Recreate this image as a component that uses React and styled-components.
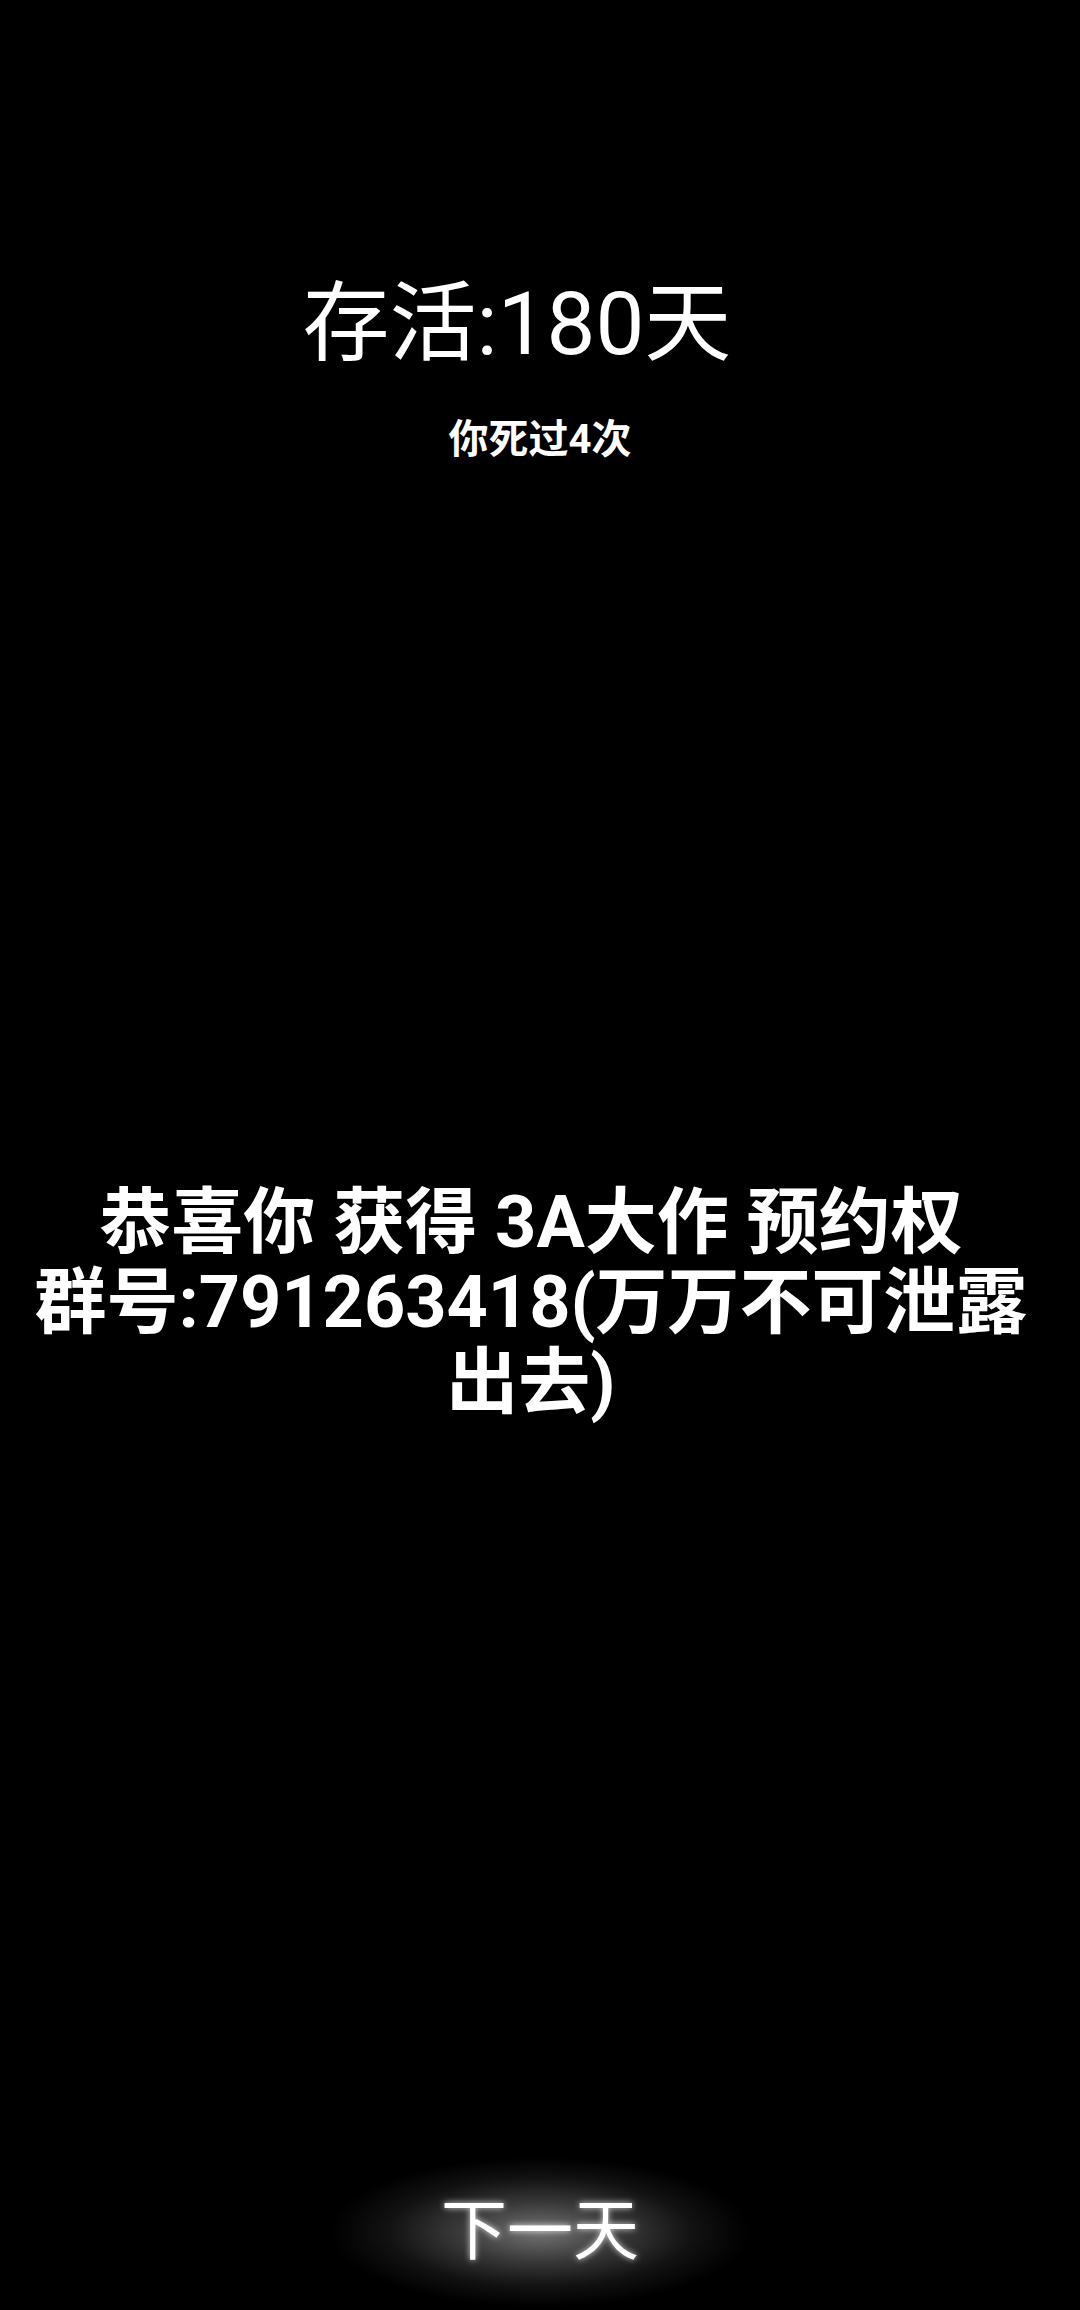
import React from 'react'
import styled, { createGlobalStyle } from 'styled-components'

const GlobalStyle = createGlobalStyle`
  html, body {
    margin: 0;
    padding: 0;
    background: #000;
  }
  body {
    font-family: Roboto, "Noto Sans CJK SC", sans-serif;
    color: #fff;
  }
`

const Screen = styled.div`
  height: 2310px;
  display: flex;
  flex-direction: column;
  align-items: stretch;
  background: #000;
  overflow: hidden;
`

const Days = styled.h1`
  margin: 274px 0 0;
  padding-right: 46px;
  font-size: 87px;
  line-height: 100px;
  font-weight: 400;
  text-align: center;
`

const Deaths = styled.div`
  margin-top: 41px;
  font-size: 40px;
  line-height: 50px;
  font-weight: 700;
  text-align: center;
`

const Message = styled.p`
  margin: 718px 0 0;
  padding: 0 40px 0 22px;
  font-size: 72px;
  line-height: 80px;
  font-weight: 700;
  text-align: center;
`

const NextButton = styled.button`
  align-self: center;
  margin-top: auto;
  margin-bottom: 3px;
  width: 420px;
  height: 150px;
  padding: 0;
  border: none;
  cursor: pointer;
  font-family: inherit;
  font-size: 66px;
  line-height: 150px;
  font-weight: 400;
  color: #fff;
  text-shadow: 0 0 6px rgba(255, 255, 255, 0.8);
  background: radial-gradient(
    closest-side at 50% 50%,
    rgba(255, 255, 255, 0.45) 0%,
    rgba(255, 255, 255, 0.22) 40%,
    rgba(255, 255, 255, 0.07) 72%,
    rgba(255, 255, 255, 0) 100%
  );
`

const App = () => {
  return (
    <>
      <GlobalStyle />
      <Screen>
        <Days>存活:180天</Days>
        <Deaths>你死过4次</Deaths>
        <Message>
          恭喜你 获得 3A大作 预约权
          <br />
          群号:791263418(万万不可泄露出去)
        </Message>
        <NextButton>下一天</NextButton>
      </Screen>
    </>
  )
}

export default App
